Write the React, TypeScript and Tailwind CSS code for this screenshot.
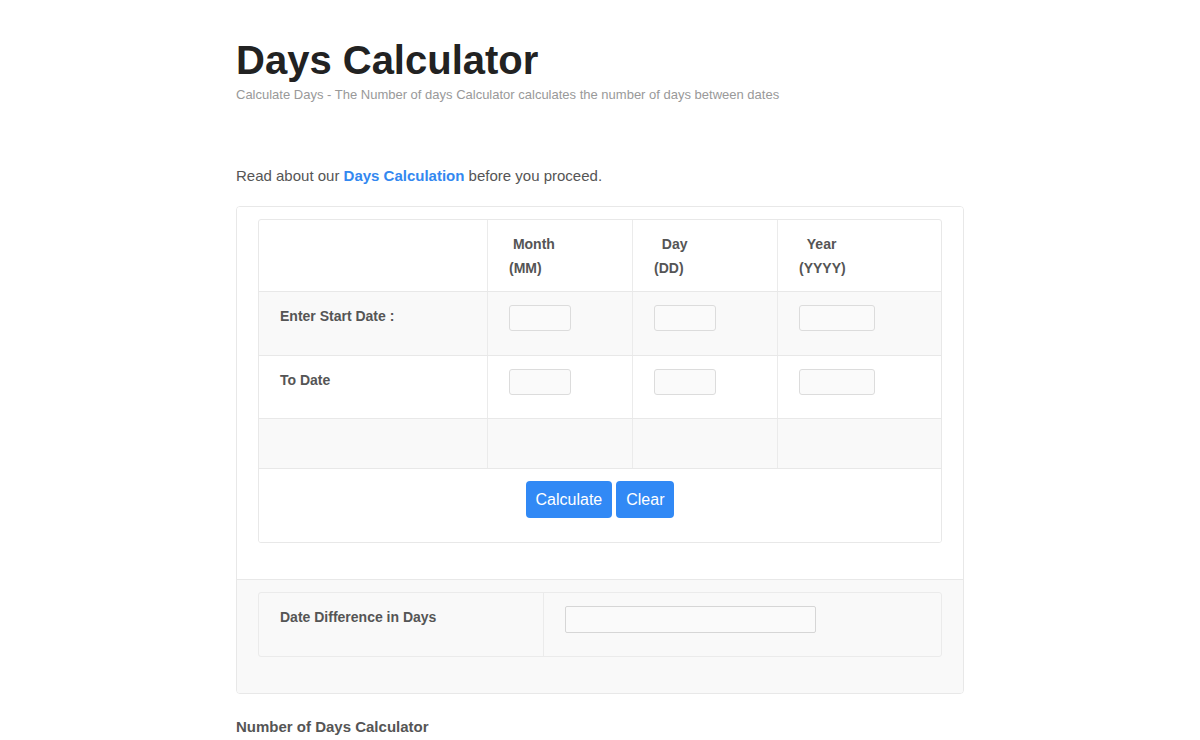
import React from 'react';

const cell = 'border-r border-[#ebebeb] last:border-r-0';

function DateRow({ label, shaded, height }: { label: string; shaded?: boolean; height: string }) {
  return (
    <div className={`grid grid-cols-[229px_145px_145px_1fr] border-b border-[#e8e8e8] ${shaded ? 'bg-[#f9f9f9]' : 'bg-white'}`}>
      <div className={`${cell} ${height} pl-[21px] pt-3 text-[14px] leading-6 font-bold text-[#555]`}>{label}</div>
      <div className={`${cell} pl-[21px] pt-[13px]`}>
        <input className="w-[62px] h-[26px] bg-[#fafafa] border border-[#dcdcdc] rounded-[3px]" />
      </div>
      <div className={`${cell} pl-[21px] pt-[13px]`}>
        <input className="w-[62px] h-[26px] bg-[#fafafa] border border-[#dcdcdc] rounded-[3px]" />
      </div>
      <div className={`${cell} pl-[21px] pt-[13px]`}>
        <input className="w-[76px] h-[26px] bg-[#fafafa] border border-[#dcdcdc] rounded-[3px]" />
      </div>
    </div>
  );
}

export default function App() {
  return (
    <div className="min-h-[740px] bg-white font-['Liberation_Sans',Arial,sans-serif] text-[#333]">
      <div className="mx-auto w-[728px] pt-[38px]">
        <h1 className="text-[40px] leading-[44px] font-bold text-[#222]">Days Calculator</h1>
        <p className="mt-[4px] text-[13px] leading-[18px] text-[#999]">
          Calculate Days - The Number of days Calculator calculates the number of days between dates
        </p>

        <p className="mt-[62px] text-[15px] leading-5 text-[#555]">
          Read about our <a href="#" className="font-bold text-[#3388f0]">Days Calculation</a> before you proceed.
        </p>

        <div className="mt-[20px] border border-[#e8e8e8] rounded-[4px] overflow-hidden">
          <div className="px-[21px] pt-3 pb-[36px] bg-white">
            <div className="border border-[#e8e8e8] rounded-[3px] overflow-hidden">
              <div className="grid grid-cols-[229px_145px_145px_1fr] border-b border-[#e8e8e8] text-[14px] leading-6 font-bold text-[#555]">
                <div className={`${cell} h-[71px]`} />
                <div className={`${cell} pl-[21px] pt-3`}>
                  <div>&nbsp;Month</div>
                  <div>(MM)</div>
                </div>
                <div className={`${cell} pl-[21px] pt-3`}>
                  <div>&nbsp;&nbsp;Day</div>
                  <div>(DD)</div>
                </div>
                <div className={`${cell} pl-[21px] pt-3`}>
                  <div>&nbsp;&nbsp;Year</div>
                  <div>(YYYY)</div>
                </div>
              </div>
              <DateRow label="Enter Start Date :" shaded height="h-[63px]" />
              <DateRow label="To Date" height="h-[62px]" />
              <div className="grid grid-cols-[229px_145px_145px_1fr] h-[50px] bg-[#f9f9f9] border-b border-[#e8e8e8]">
                <div className={cell} />
                <div className={cell} />
                <div className={cell} />
                <div className={cell} />
              </div>
              <div className="flex justify-center gap-1 pt-3 pb-[24px] bg-white">
                <button className="h-[37px] px-[10px] rounded-[4px] bg-[#3189f5] text-white text-[16px]">Calculate</button>
                <button className="h-[37px] px-[10px] rounded-[4px] bg-[#3189f5] text-white text-[16px]">Clear</button>
              </div>
            </div>
          </div>

          <div className="border-t border-[#e8e8e8] bg-[#f9f9f9] px-[21px] pt-3 pb-[36px]">
            <div className="grid grid-cols-[285px_1fr] border border-[#ebebeb] rounded-[3px] h-[65px]">
              <div className="border-r border-[#ebebeb] pl-[21px] pt-3 text-[14px] leading-6 font-bold text-[#555]">
                Date Difference in Days
              </div>
              <div className="pl-[21px] pt-[13px]">
                <input className="w-[251px] h-[27px] bg-[#fafafa] border border-[#d6d6d6] rounded-[2px]" />
              </div>
            </div>
          </div>
        </div>

        <h2 className="mt-[23px] text-[15px] leading-5 font-bold text-[#555]">Number of Days Calculator</h2>
      </div>
    </div>
  );
}
